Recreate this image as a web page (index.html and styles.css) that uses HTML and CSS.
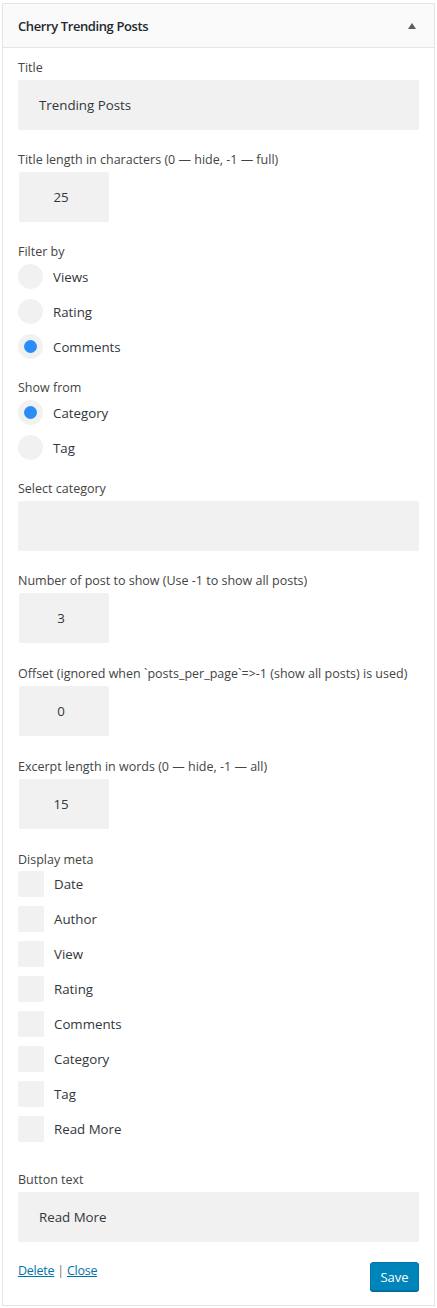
FILE: index.html
```html
<!DOCTYPE html>
<html>
<head>
<meta charset="utf-8">
<link rel="stylesheet" href="styles.css">
</head>
<body>
<div class="widget">
  <div class="widget-top">
    <h3 class="widget-title">Cherry Trending Posts</h3>
    <svg class="toggle" width="8" height="6" viewBox="0 0 8 6"><polygon points="4,0 8,6 0,6" fill="#555d66"/></svg>
  </div>
  <div class="widget-inside">
    <div class="field">
      <label class="field-label">Title</label>
      <div class="text-input wide">Trending Posts</div>
    </div>
    <div class="field">
      <label class="field-label">Title length in characters (0 — hide, -1 — full)</label>
      <div class="text-input num">25</div>
    </div>
    <div class="field radio-field">
      <label class="field-label">Filter by</label>
      <div class="choice"><span class="radio"></span><span>Views</span></div>
      <div class="choice"><span class="radio"></span><span>Rating</span></div>
      <div class="choice"><span class="radio checked"></span><span>Comments</span></div>
    </div>
    <div class="field radio-field">
      <label class="field-label">Show from</label>
      <div class="choice"><span class="radio checked"></span><span>Category</span></div>
      <div class="choice"><span class="radio"></span><span>Tag</span></div>
    </div>
    <div class="field">
      <label class="field-label">Select category</label>
      <div class="text-input wide"></div>
    </div>
    <div class="field wide-gap">
      <label class="field-label">Number of post to show (Use -1 to show all posts)</label>
      <div class="text-input num">3</div>
    </div>
    <div class="field wide-gap">
      <label class="field-label">Offset (ignored when `posts_per_page`=&gt;-1 (show all posts) is used)</label>
      <div class="text-input num">0</div>
    </div>
    <div class="field wide-gap">
      <label class="field-label">Excerpt length in words (0 — hide, -1 — all)</label>
      <div class="text-input num">15</div>
    </div>
    <div class="field check-field">
      <label class="field-label">Display meta</label>
      <div class="choice"><span class="checkbox"></span><span>Date</span></div>
      <div class="choice"><span class="checkbox"></span><span>Author</span></div>
      <div class="choice"><span class="checkbox"></span><span>View</span></div>
      <div class="choice"><span class="checkbox"></span><span>Rating</span></div>
      <div class="choice"><span class="checkbox"></span><span>Comments</span></div>
      <div class="choice"><span class="checkbox"></span><span>Category</span></div>
      <div class="choice"><span class="checkbox"></span><span>Tag</span></div>
      <div class="choice"><span class="checkbox"></span><span>Read More</span></div>
    </div>
    <div class="field last-field">
      <label class="field-label">Button text</label>
      <div class="text-input wide">Read More</div>
    </div>
    <div class="widget-control">
      <div class="links"><a href="#">Delete</a> <span class="sep">|</span> <a href="#">Close</a></div>
      <button class="save">Save</button>
    </div>
  </div>
</div>
</body>
</html>
```
FILE: styles.css
```css
* { box-sizing: border-box; }
html, body { margin: 0; padding: 0; background: #fff; }
body {
  font-family: "Open Sans", "Noto Sans", sans-serif;
  font-size: 12.5px;
  color: #444;
  padding: 3px 2px 2px 2px;
}
.widget {
  border: 1px solid #e5e5e5;
  background: #fff;
}
.widget-top {
  height: 44px;
  background: #fafafa;
  border-bottom: 1px solid #e5e5e5;
  display: flex;
  align-items: center;
  justify-content: space-between;
  padding: 0 18px 0 15px;
}
.widget-title {
  margin: 0;
  font-size: 13px;
  font-weight: 600;
  letter-spacing: -0.4px;
  color: #23282d;
  line-height: 20px;
}
.toggle { display: block; }
.widget-inside {
  padding: 9px 15px 14px 15px;
}
.field { margin-bottom: 19px; }
.wide-gap { margin-bottom: 20px; }
.radio-field { margin-bottom: 18px; }
.check-field { margin-bottom: 27px; }
.last-field { margin-bottom: 0; }
.field-label {
  display: block;
  line-height: 19px;
  padding-top: 1px;
  height: 19px;
  margin-bottom: 4px;
  white-space: nowrap;
}
.text-input {
  height: 50px;
  background: #f1f1f1;
  border-radius: 2px;
  font-size: 13.3px;
  color: #32373c;
  line-height: 50px;
}
.text-input.wide { padding-left: 21px; }
.text-input.num { width: 90px; text-align: center; margin-left: 1px; padding-right: 6px; }
.choice {
  display: flex;
  align-items: center;
  height: 25px;
  margin-bottom: 10px;
  font-size: 13.3px;
  color: #32373c;
}
.choice:last-child { margin-bottom: 0; }
.radio {
  width: 25px;
  height: 25px;
  border-radius: 50%;
  background: #f1f1f1;
  margin-right: 10px;
  display: flex;
  align-items: center;
  justify-content: center;
  flex: none;
}
.radio.checked::after {
  content: "";
  width: 13px;
  height: 13px;
  border-radius: 50%;
  background: #2a8df7;
}
.check-field .field-label { margin-bottom: 3px; }
.check-field .choice { height: 26px; margin-bottom: 9px; }
.checkbox {
  width: 26px;
  height: 26px;
  border-radius: 2px;
  background: #f1f1f1;
  margin-right: 10px;
  flex: none;
}
.widget-control {
  display: flex;
  justify-content: space-between;
  align-items: flex-start;
  margin-top: 20px;
}
.links { line-height: 18px; font-size: 12.5px; letter-spacing: -0.25px; color: #72777c; }
.links a { color: #0073aa; text-decoration: underline; }
.save {
  font-family: inherit;
  font-size: 13px;
  color: #fff;
  background: #0085ba;
  border: 1px solid #0073aa;
  border-radius: 3px;
  box-shadow: 0 1px 0 #006799;
  height: 29px;
  width: 49px;
  padding: 0;
  line-height: 26px;
}
```
